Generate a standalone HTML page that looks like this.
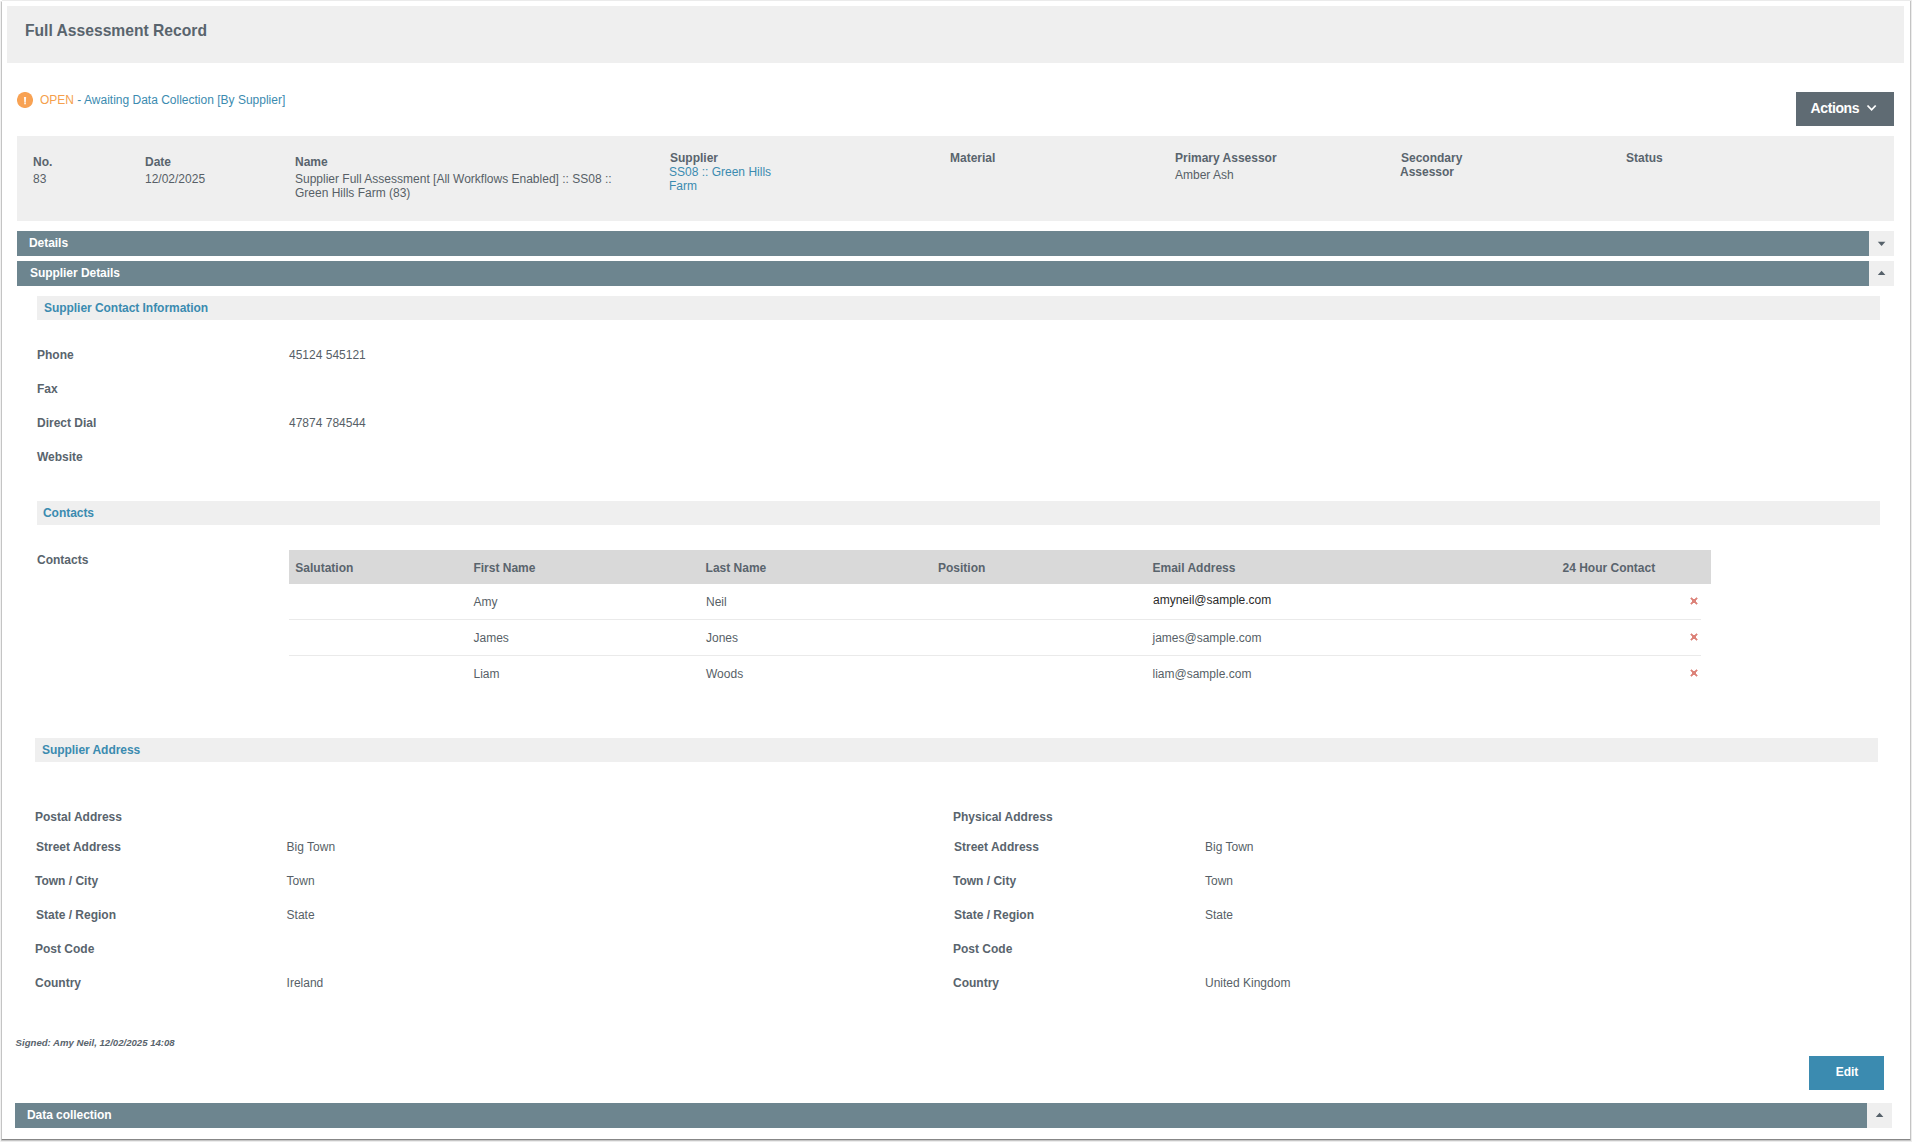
<!DOCTYPE html>
<html lang="en">
<head>
<meta charset="utf-8">
<title>Full Assessment Record</title>
<style>
*{box-sizing:border-box;margin:0;padding:0}
html,body{width:1912px;height:1142px;overflow:hidden;background:#fff}
body{position:relative;font-family:"Liberation Sans",Arial,sans-serif;font-size:12px;line-height:14px;color:#575f67}
.a{position:absolute;white-space:nowrap}
.b{font-weight:bold;color:#59646d}
.bar{position:absolute;background:#6d858f;height:25px;color:#fff;font-weight:bold;font-size:12px;line-height:25px;letter-spacing:-.05px}
.tog{position:absolute;background:#efefef;width:25px;height:25px}
.tog svg{position:absolute;left:8px;top:8px}
.sub{position:absolute;background:#efefef;height:24px;line-height:24px;color:#3b8bb0;font-weight:bold;font-size:12px;letter-spacing:-.045px}
.lnk{color:#3b8bb0}
.x{position:absolute;width:8px;height:8px}
.hr{position:absolute;left:289px;width:1412px;height:1px;background:#eaeaea}
</style>
</head>
<body>
<!-- outer frame -->
<div class="a" style="left:2px;top:0;width:1910px;height:1px;background:#ebebeb"></div>
<div class="a" style="left:0;top:1px;width:1px;height:1141px;background:#f1f1f1"></div>
<div class="a" style="left:1px;top:1px;width:1px;height:1px;background:#e2e2e2"></div>
<div class="a" style="left:1px;top:2px;width:1px;height:1137px;background:#c4c4c4"></div>
<div class="a" style="left:1910px;top:1px;width:1px;height:1138px;background:#c4c4c4"></div>
<div class="a" style="left:1911px;top:1px;width:1px;height:1141px;background:#ececec"></div>
<div class="a" style="left:2px;top:1139px;width:1908px;height:1px;background:#878787"></div>
<div class="a" style="left:1px;top:1139px;width:1px;height:1px;background:#b4b4b4"></div>
<div class="a" style="left:1910px;top:1139px;width:1px;height:1px;background:#b4b4b4"></div>
<div class="a" style="left:1px;top:1140px;width:1910px;height:1px;background:#c6c6c6"></div>
<div class="a" style="left:1px;top:1141px;width:1911px;height:1px;background:#ececec"></div>

<!-- title -->
<div class="a" style="left:7px;top:6px;width:1897px;height:57px;background:#efefef"></div>
<div class="a b" style="left:25px;top:21px;font-size:15.65px;line-height:20px">Full Assessment Record</div>

<!-- status line -->
<svg class="a" style="left:17px;top:92px" width="16" height="16" viewBox="0 0 16 16"><circle cx="8" cy="8" r="8.05" fill="#f8a253"/><path d="M6.95 4.9H9.15L8.8 10.7H7.3Z" fill="#fff" opacity=".92"/><rect x="7.1" y="11.15" width="1.9" height="1.1" fill="#fff" opacity=".92"/></svg>
<div class="a" style="left:40px;top:93px"><span style="color:#f5a04c">OPEN</span> <span class="lnk">- Awaiting Data Collection [By Supplier]</span></div>

<!-- actions button -->
<div class="a" style="left:1796px;top:92px;width:98px;height:34px;background:#5f6b73"></div>
<div class="a" style="left:1810.5px;top:99px;color:#fff;font-weight:bold;font-size:14px;line-height:18px;letter-spacing:-.38px">Actions</div>
<svg class="a" style="left:1865px;top:103px" width="13" height="10" viewBox="0 0 13 10"><path d="M2.5 2.5 L6.6 6.8 L10.7 2.5" fill="none" stroke="#fff" stroke-width="1.8"/></svg>

<!-- info panel -->
<div class="a" style="left:17px;top:136px;width:1877px;height:85px;background:#efefef"></div>
<div class="a b" style="left:33px;top:155px">No.</div>
<div class="a" style="left:33px;top:172px">83</div>
<div class="a b" style="left:145px;top:155px">Date</div>
<div class="a" style="left:145px;top:172px">12/02/2025</div>
<div class="a b" style="left:295px;top:155px">Name</div>
<div class="a" style="left:295px;top:172px">Supplier Full Assessment [All Workflows Enabled] :: SS08 ::<br>Green Hills Farm (83)</div>
<div class="a b" style="left:670px;top:151px">Supplier</div>
<div class="a lnk" style="left:669px;top:165px">SS08 :: Green Hills<br>Farm</div>
<div class="a b" style="left:950px;top:151px">Material</div>
<div class="a b" style="left:1175px;top:151px">Primary Assessor</div>
<div class="a" style="left:1175px;top:168px">Amber Ash</div>
<div class="a b" style="left:1401px;top:151px">Secondary</div>
<div class="a b" style="left:1400px;top:165px">Assessor</div>
<div class="a b" style="left:1626px;top:151px">Status</div>

<!-- bars -->
<div class="bar" style="left:17px;top:231px;width:1852px;padding-left:12px">Details</div>
<div class="tog" style="left:1869px;top:231px"><svg width="10" height="10" viewBox="0 0 10 10"><path d="M0.8 2.8H8.4L4.6 7Z" fill="#56616a"/></svg></div>
<div class="bar" style="left:17px;top:261px;width:1852px;padding-left:13px">Supplier Details</div>
<div class="tog" style="left:1869px;top:261px"><svg width="10" height="10" viewBox="0 0 10 10"><path d="M0.8 6H8.4L4.6 1.8Z" fill="#56616a"/></svg></div>

<!-- supplier contact information -->
<div class="sub" style="left:37px;top:296px;width:1843px;padding-left:7px">Supplier Contact Information</div>
<div class="a b" style="left:37px;top:348px">Phone</div>
<div class="a" style="left:289px;top:348px">45124 545121</div>
<div class="a b" style="left:37px;top:382px">Fax</div>
<div class="a b" style="left:37px;top:416px">Direct Dial</div>
<div class="a" style="left:289px;top:416px">47874 784544</div>
<div class="a b" style="left:37px;top:450px">Website</div>

<!-- contacts -->
<div class="sub" style="left:37px;top:501px;width:1843px;padding-left:6px">Contacts</div>
<div class="a b" style="left:37px;top:553px">Contacts</div>
<div class="a" style="left:289px;top:550px;width:1422px;height:34px;background:#d9d9d9"></div>
<div class="a b" style="left:295.3px;top:561px">Salutation</div>
<div class="a b" style="left:473.4px;top:561px">First Name</div>
<div class="a b" style="left:705.6px;top:561px">Last Name</div>
<div class="a b" style="left:938px;top:561px">Position</div>
<div class="a b" style="left:1152.5px;top:561px">Email Address</div>
<div class="a b" style="left:1562.5px;top:561px">24 Hour Contact</div>

<div class="a" style="left:473.5px;top:595px">Amy</div>
<div class="a" style="left:706px;top:595px">Neil</div>
<div class="a" style="left:1153px;top:593px;color:#2a2a2a">amyneil@sample.com</div>
<div class="hr" style="top:619px"></div>
<div class="a" style="left:473.5px;top:631px">James</div>
<div class="a" style="left:706px;top:631px">Jones</div>
<div class="a" style="left:1152.5px;top:631px">james@sample.com</div>
<div class="hr" style="top:655px"></div>
<div class="a" style="left:473.5px;top:667px">Liam</div>
<div class="a" style="left:706px;top:667px">Woods</div>
<div class="a" style="left:1152.5px;top:667px">liam@sample.com</div>
<svg class="x" style="left:1690px;top:597px" viewBox="0 0 8 8" shape-rendering="crispEdges" fill="#dc8279"><rect x="1" y="0" width="1" height="1" opacity=".55"/><rect x="6" y="0" width="1" height="1" opacity=".55"/><rect x="0" y="1" width="1" height="1" opacity=".55"/><rect x="1" y="1" width="1" height="1" opacity="1"/><rect x="2" y="1" width="1" height="1" opacity=".8"/><rect x="5" y="1" width="1" height="1" opacity=".8"/><rect x="6" y="1" width="1" height="1" opacity="1"/><rect x="7" y="1" width="1" height="1" opacity=".55"/><rect x="1" y="2" width="1" height="1" opacity=".8"/><rect x="2" y="2" width="1" height="1" opacity="1"/><rect x="3" y="2" width="1" height="1" opacity="1"/><rect x="4" y="2" width="1" height="1" opacity="1"/><rect x="5" y="2" width="1" height="1" opacity="1"/><rect x="6" y="2" width="1" height="1" opacity=".8"/><rect x="2" y="3" width="1" height="1" opacity="1"/><rect x="3" y="3" width="1" height="1" opacity="1"/><rect x="4" y="3" width="1" height="1" opacity="1"/><rect x="5" y="3" width="1" height="1" opacity="1"/><rect x="2" y="4" width="1" height="1" opacity="1"/><rect x="3" y="4" width="1" height="1" opacity="1"/><rect x="4" y="4" width="1" height="1" opacity="1"/><rect x="5" y="4" width="1" height="1" opacity="1"/><rect x="1" y="5" width="1" height="1" opacity=".8"/><rect x="2" y="5" width="1" height="1" opacity="1"/><rect x="3" y="5" width="1" height="1" opacity="1"/><rect x="4" y="5" width="1" height="1" opacity="1"/><rect x="5" y="5" width="1" height="1" opacity="1"/><rect x="6" y="5" width="1" height="1" opacity=".8"/><rect x="0" y="6" width="1" height="1" opacity=".55"/><rect x="1" y="6" width="1" height="1" opacity="1"/><rect x="2" y="6" width="1" height="1" opacity=".8"/><rect x="5" y="6" width="1" height="1" opacity=".8"/><rect x="6" y="6" width="1" height="1" opacity="1"/><rect x="7" y="6" width="1" height="1" opacity=".55"/><rect x="1" y="7" width="1" height="1" opacity=".55"/><rect x="6" y="7" width="1" height="1" opacity=".55"/></svg>
<svg class="x" style="left:1690px;top:633px" viewBox="0 0 8 8" shape-rendering="crispEdges" fill="#dc8279"><rect x="1" y="0" width="1" height="1" opacity=".55"/><rect x="6" y="0" width="1" height="1" opacity=".55"/><rect x="0" y="1" width="1" height="1" opacity=".55"/><rect x="1" y="1" width="1" height="1" opacity="1"/><rect x="2" y="1" width="1" height="1" opacity=".8"/><rect x="5" y="1" width="1" height="1" opacity=".8"/><rect x="6" y="1" width="1" height="1" opacity="1"/><rect x="7" y="1" width="1" height="1" opacity=".55"/><rect x="1" y="2" width="1" height="1" opacity=".8"/><rect x="2" y="2" width="1" height="1" opacity="1"/><rect x="3" y="2" width="1" height="1" opacity="1"/><rect x="4" y="2" width="1" height="1" opacity="1"/><rect x="5" y="2" width="1" height="1" opacity="1"/><rect x="6" y="2" width="1" height="1" opacity=".8"/><rect x="2" y="3" width="1" height="1" opacity="1"/><rect x="3" y="3" width="1" height="1" opacity="1"/><rect x="4" y="3" width="1" height="1" opacity="1"/><rect x="5" y="3" width="1" height="1" opacity="1"/><rect x="2" y="4" width="1" height="1" opacity="1"/><rect x="3" y="4" width="1" height="1" opacity="1"/><rect x="4" y="4" width="1" height="1" opacity="1"/><rect x="5" y="4" width="1" height="1" opacity="1"/><rect x="1" y="5" width="1" height="1" opacity=".8"/><rect x="2" y="5" width="1" height="1" opacity="1"/><rect x="3" y="5" width="1" height="1" opacity="1"/><rect x="4" y="5" width="1" height="1" opacity="1"/><rect x="5" y="5" width="1" height="1" opacity="1"/><rect x="6" y="5" width="1" height="1" opacity=".8"/><rect x="0" y="6" width="1" height="1" opacity=".55"/><rect x="1" y="6" width="1" height="1" opacity="1"/><rect x="2" y="6" width="1" height="1" opacity=".8"/><rect x="5" y="6" width="1" height="1" opacity=".8"/><rect x="6" y="6" width="1" height="1" opacity="1"/><rect x="7" y="6" width="1" height="1" opacity=".55"/><rect x="1" y="7" width="1" height="1" opacity=".55"/><rect x="6" y="7" width="1" height="1" opacity=".55"/></svg>
<svg class="x" style="left:1690px;top:669px" viewBox="0 0 8 8" shape-rendering="crispEdges" fill="#dc8279"><rect x="1" y="0" width="1" height="1" opacity=".55"/><rect x="6" y="0" width="1" height="1" opacity=".55"/><rect x="0" y="1" width="1" height="1" opacity=".55"/><rect x="1" y="1" width="1" height="1" opacity="1"/><rect x="2" y="1" width="1" height="1" opacity=".8"/><rect x="5" y="1" width="1" height="1" opacity=".8"/><rect x="6" y="1" width="1" height="1" opacity="1"/><rect x="7" y="1" width="1" height="1" opacity=".55"/><rect x="1" y="2" width="1" height="1" opacity=".8"/><rect x="2" y="2" width="1" height="1" opacity="1"/><rect x="3" y="2" width="1" height="1" opacity="1"/><rect x="4" y="2" width="1" height="1" opacity="1"/><rect x="5" y="2" width="1" height="1" opacity="1"/><rect x="6" y="2" width="1" height="1" opacity=".8"/><rect x="2" y="3" width="1" height="1" opacity="1"/><rect x="3" y="3" width="1" height="1" opacity="1"/><rect x="4" y="3" width="1" height="1" opacity="1"/><rect x="5" y="3" width="1" height="1" opacity="1"/><rect x="2" y="4" width="1" height="1" opacity="1"/><rect x="3" y="4" width="1" height="1" opacity="1"/><rect x="4" y="4" width="1" height="1" opacity="1"/><rect x="5" y="4" width="1" height="1" opacity="1"/><rect x="1" y="5" width="1" height="1" opacity=".8"/><rect x="2" y="5" width="1" height="1" opacity="1"/><rect x="3" y="5" width="1" height="1" opacity="1"/><rect x="4" y="5" width="1" height="1" opacity="1"/><rect x="5" y="5" width="1" height="1" opacity="1"/><rect x="6" y="5" width="1" height="1" opacity=".8"/><rect x="0" y="6" width="1" height="1" opacity=".55"/><rect x="1" y="6" width="1" height="1" opacity="1"/><rect x="2" y="6" width="1" height="1" opacity=".8"/><rect x="5" y="6" width="1" height="1" opacity=".8"/><rect x="6" y="6" width="1" height="1" opacity="1"/><rect x="7" y="6" width="1" height="1" opacity=".55"/><rect x="1" y="7" width="1" height="1" opacity=".55"/><rect x="6" y="7" width="1" height="1" opacity=".55"/></svg>

<!-- supplier address -->
<div class="sub" style="left:35px;top:738px;width:1843px;padding-left:7px">Supplier Address</div>
<div class="a b" style="left:35px;top:810px">Postal Address</div>
<div class="a b" style="left:36px;top:840px">Street Address</div>
<div class="a" style="left:286.6px;top:840px">Big Town</div>
<div class="a b" style="left:35px;top:874px">Town / City</div>
<div class="a" style="left:286.6px;top:874px">Town</div>
<div class="a b" style="left:36px;top:908px">State / Region</div>
<div class="a" style="left:286.6px;top:908px">State</div>
<div class="a b" style="left:35px;top:942px">Post Code</div>
<div class="a b" style="left:35px;top:976px">Country</div>
<div class="a" style="left:286.6px;top:976px">Ireland</div>

<div class="a b" style="left:953px;top:810px">Physical Address</div>
<div class="a b" style="left:954px;top:840px">Street Address</div>
<div class="a" style="left:1205px;top:840px">Big Town</div>
<div class="a b" style="left:953px;top:874px">Town / City</div>
<div class="a" style="left:1205px;top:874px">Town</div>
<div class="a b" style="left:954px;top:908px">State / Region</div>
<div class="a" style="left:1205px;top:908px">State</div>
<div class="a b" style="left:953px;top:942px">Post Code</div>
<div class="a b" style="left:953px;top:976px">Country</div>
<div class="a" style="left:1205px;top:976px">United Kingdom</div>

<!-- signed -->
<div class="a b" style="left:15.6px;top:1037px;font-size:9.6px;line-height:12px;font-style:italic">Signed: Amy Neil, 12/02/2025 14:08</div>

<!-- edit -->
<div class="a" style="left:1809px;top:1056px;width:75px;height:34px;background:#3b8bb0;color:#fff;font-weight:bold;font-size:12px;line-height:32px;text-align:center;padding-left:1px">Edit</div>

<!-- data collection -->
<div class="bar" style="left:15px;top:1103px;width:1852px;padding-left:12px">Data collection</div>
<div class="tog" style="left:1867px;top:1103px"><svg width="10" height="10" viewBox="0 0 10 10"><path d="M0.8 6H8.4L4.6 1.8Z" fill="#56616a"/></svg></div>
</body>
</html>
